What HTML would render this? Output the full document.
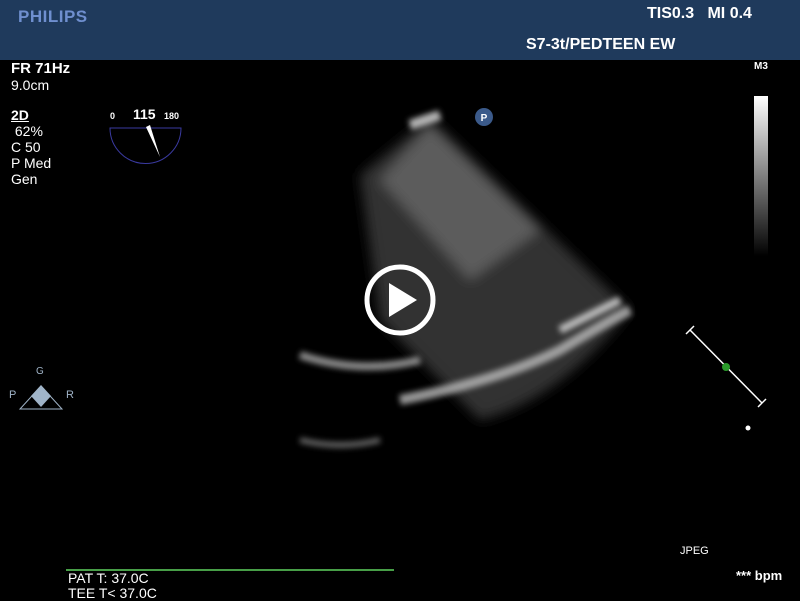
<!DOCTYPE html>
<html><head><style>
body{margin:0;width:800px;height:600px;background:#000;overflow:hidden;position:relative;font-family:"Liberation Sans",sans-serif;color:#fff}
.t{position:absolute;white-space:nowrap}
</style></head><body>
<div style="position:absolute;left:0;top:0;width:800px;height:60px;background:#1f3a5c"></div>
<div class="t" style="left:18px;top:7px;font-size:17px;font-weight:bold;color:#6f8fcf;letter-spacing:0.5px">PHILIPS</div>
<div class="t" style="left:647px;top:5px;font-size:16px;font-weight:bold">TIS0.3&nbsp;&nbsp;&nbsp;MI 0.4</div>
<div class="t" style="left:526px;top:36px;font-size:16px;font-weight:bold">S7-3t/PEDTEEN EW</div>
<div class="t" style="left:11px;top:60px;font-size:15px;font-weight:bold">FR 71Hz</div>
<div class="t" style="left:11px;top:77px;font-size:14px">9.0cm</div>
<div class="t" style="left:11px;top:107px;font-size:14px;line-height:16px;font-weight:bold;text-decoration:underline">2D</div>
<div class="t" style="left:11px;top:123px;font-size:14px;line-height:16px"> &nbsp;62%<br>C 50<br>P Med<br>Gen</div>
<div class="t" style="left:110px;top:111px;font-size:9px;font-weight:bold">0</div>
<div class="t" style="left:133px;top:106px;font-size:14px;font-weight:bold">115</div>
<div class="t" style="left:164px;top:111px;font-size:9px;font-weight:bold">180</div>
<svg style="position:absolute;left:0;top:0" width="800" height="600">
<defs>
<linearGradient id="b" x1="0" y1="0" x2="0" y2="1"><stop offset="0" stop-color="#fff"/><stop offset="1" stop-color="#000"/></linearGradient>
<filter id="f"><feGaussianBlur stdDeviation="6"/></filter>
<filter id="f2"><feGaussianBlur stdDeviation="3"/></filter>
</defs>
<path d="M110 128 L181 128 A35 35 0 0 1 110 128 Z" fill="none" stroke="#3a3aa0"/>
<path d="M146 127 L150 125 L160 157 Z" fill="#fff"/>
<g filter="url(#f)">
<path d="M360 175 L430 118 L630 310 Q560 400 480 420 L380 320 Z" fill="#333"/>
<path d="M380 180 L430 125 L540 230 L470 280 Z" fill="#666" opacity="0.8"/>
</g>
<g filter="url(#f2)" opacity="0.8">
<path d="M300 355 Q360 375 420 360" stroke="#aaa" stroke-width="8" fill="none"/>
<path d="M400 400 Q500 380 560 350 Q610 320 630 310" stroke="#bbb" stroke-width="10" fill="none"/>
<path d="M560 330 L620 300" stroke="#ddd" stroke-width="8" fill="none"/>
<path d="M410 125 L440 115" stroke="#ddd" stroke-width="10" fill="none"/>
<path d="M300 440 Q340 450 380 440" stroke="#777" stroke-width="6" fill="none"/>
</g>
<circle cx="400" cy="300" r="33" fill="none" stroke="#fff" stroke-width="5"/>
<path d="M389 283 L417 300 L389 317 Z" fill="#fff"/>
<circle cx="484" cy="117" r="9" fill="#3b5a8a"/><text x="484" y="121" font-size="10" fill="#fff" text-anchor="middle" font-family="Liberation Sans" font-weight="bold">P</text>
<rect x="754" y="96" width="14" height="160" fill="url(#b)"/>
<line x1="690" y1="330" x2="762" y2="403" stroke="#fff" stroke-width="1.5"/>
<line x1="686" y1="334" x2="694" y2="326" stroke="#fff" stroke-width="1.5"/>
<line x1="758" y1="407" x2="766" y2="399" stroke="#fff" stroke-width="1.5"/>
<circle cx="726" cy="367" r="4" fill="#2a9a2a"/>
<circle cx="748" cy="428" r="2.5" fill="#fff"/>
<path d="M20 409 L62 409 L41 386 Z" fill="none" stroke="#a0b4c8"/>
<path d="M41 385 L51 396 L41 407 L31 396 Z" fill="#a0b4c8"/>
<line x1="66" y1="570" x2="394" y2="570" stroke="#5fd35f" stroke-width="1.5"/>
</svg>
<div class="t" style="left:754px;top:61px;font-size:10px;font-weight:bold">M3</div>
<div class="t" style="left:36px;top:366px;font-size:10px;color:#a0b4c8">G</div>
<div class="t" style="left:9px;top:389px;font-size:11px;color:#a0b4c8">P</div>
<div class="t" style="left:66px;top:389px;font-size:11px;color:#a0b4c8">R</div>
<div class="t" style="left:680px;top:545px;font-size:11px">JPEG</div>
<div class="t" style="left:736px;top:568px;font-size:13px;font-weight:bold">*** bpm</div>
<div class="t" style="left:68px;top:571px;font-size:14px;line-height:15px">PAT T: 37.0C<br>TEE T&lt; 37.0C</div>
</body></html>
